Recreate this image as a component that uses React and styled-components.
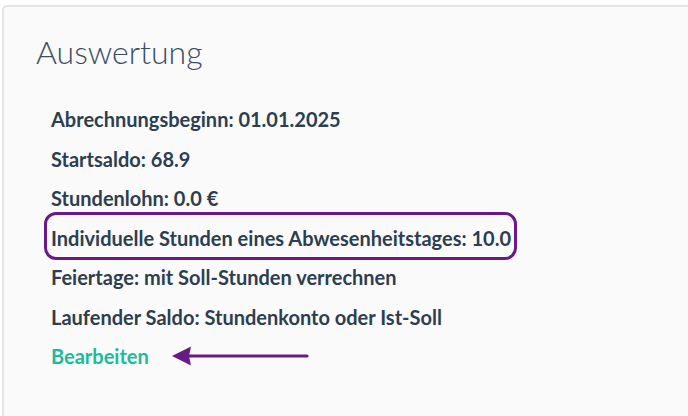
import React from "react";
import styled, { createGlobalStyle } from "styled-components";

const GlobalStyle = createGlobalStyle`
  html, body {
    margin: 0;
    padding: 0;
    background: #ffffff;
    overflow: hidden;
    font-family: Lato, "Open Sans", sans-serif;
  }
`;

const Card = styled("section")`
  box-sizing: border-box;
  margin: 5px 0 0 2px;
  width: 686px;
  height: 411px;
  background: #fafafa;
  border: 2px solid #e4e4e4;
  border-right: none;
  border-bottom: none;
  border-radius: 5px 0 0 0;
  padding: 26px 0 0 32px;
`;

const Title = styled("h2")`
  margin: 0;
  font-family: Lato, sans-serif;
  font-weight: 300;
  font-size: 32px;
  line-height: 38px;
  color: #3a4e63;
`;

const List = styled("div")`
  display: flex;
  flex-direction: column;
  align-items: flex-start;
  gap: 15.5px;
  margin-top: 36px;
  padding-left: 15px;
`;

const Row = styled("div")`
  position: relative;
  display: flex;
  align-items: center;
  gap: 22px;
  font-size: 20px;
  font-weight: 700;
  line-height: 24px;
  color: ${(p) => (p.$link ? "#1abc9c" : "#2c3e50")};

  ${(p) =>
    p.$marked &&
    `
    &::before {
      content: "";
      position: absolute;
      left: -7px;
      right: -6px;
      top: -14px;
      bottom: -10px;
      border: 3px solid #691a86;
      border-radius: 12px;
    }
  `}
`;

const Arrow = () => (
  <svg width="138" height="22" viewBox="0 0 138 22">
    <path d="M17 11 H136" stroke="#691a86" strokeWidth="3.2" strokeLinecap="round" />
    <path d="M1 11 L20 1.5 L18 11 L20 20.5 Z" fill="#691a86" />
  </svg>
);

const items = [
  "Abrechnungsbeginn: 01.01.2025",
  "Startsaldo: 68.9",
  "Stundenlohn: 0.0 €",
  "Individuelle Stunden eines Abwesenheitstages: 10.0",
  "Feiertage: mit Soll-Stunden verrechnen",
  "Laufender Saldo: Stundenkonto oder Ist-Soll",
];

export default function App() {
  return (
    <>
      <GlobalStyle />
      <Card>
        <Title>Auswertung</Title>
        <List>
          {items.map((t, i) => (
            <Row key={t} $marked={i === 3}>
              {t}
            </Row>
          ))}
          <Row $link>
            Bearbeiten
            <Arrow />
          </Row>
        </List>
      </Card>
    </>
  );
}
